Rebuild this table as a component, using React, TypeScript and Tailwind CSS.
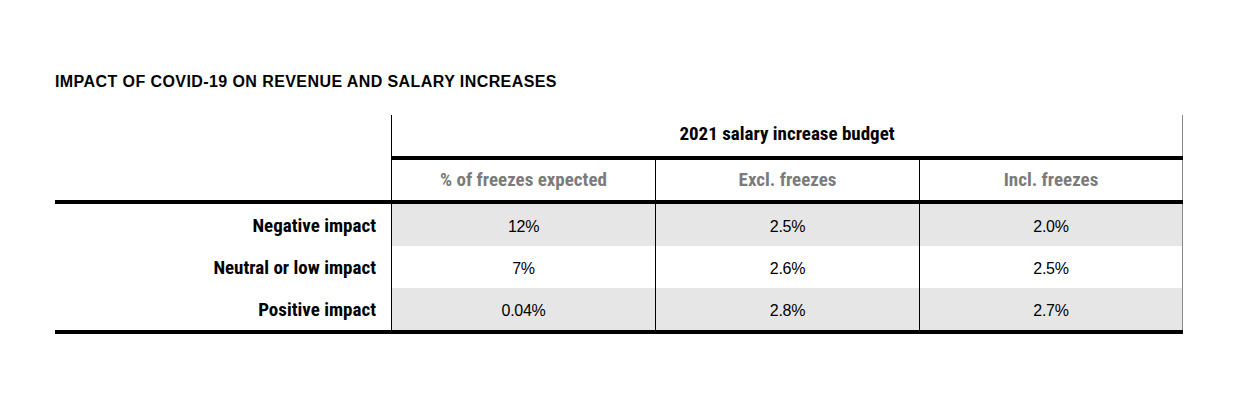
const condensed = { fontFamily: '"Roboto Condensed", "DejaVu Sans Condensed", "Liberation Sans", sans-serif' }

const rows = [
  { label: 'Negative impact', values: ['12%', '2.5%', '2.0%'], shaded: true },
  { label: 'Neutral or low impact', values: ['7%', '2.6%', '2.5%'], shaded: false },
  { label: 'Positive impact', values: ['0.04%', '2.8%', '2.7%'], shaded: true },
]

const subHeads = ['% of freezes expected', 'Excl. freezes', 'Incl. freezes']

export default function App() {
  return (
    <div className="w-[1250px] h-[417px] bg-white text-black" style={{ fontFamily: '"Liberation Sans", Arial, sans-serif' }}>
      <div className="ml-[55px] w-[1128px] pt-[72px]">
        {/* Title */}
        <h2 className="text-[16px] leading-[20px] font-bold tracking-[0.42px]">
          IMPACT OF COVID-19 ON REVENUE AND SALARY INCREASES
        </h2>

        {/* Table */}
        <div className="mt-[23px]">
          {/* group header */}
          <div className="flex h-[41px]">
            <div className="w-[336px]" />
            <div
              className="flex-1 flex items-center justify-center border-l border-black border-r border-r-[#8a8a8a] text-[19px] font-bold pb-[2px]"
              style={condensed}
            >
              2021 salary increase budget
            </div>
          </div>
          <div className="flex h-[4px]">
            <div className="w-[336px]" />
            <div className="flex-1 bg-black" />
          </div>

          {/* column headers */}
          <div className="flex h-[40px]">
            <div className="w-[336px]" />
            {subHeads.map((h, i) => (
              <div
                key={h}
                className={`flex items-center justify-center border-l border-black text-[19px] font-bold text-[#7b7b7b] ${i === 2 ? 'w-[264px] border-r border-r-[#8a8a8a]' : 'w-[264px]'}`}
                style={condensed}
              >
                {h}
              </div>
            ))}
          </div>
          <div className="h-[4px] bg-black" />

          {/* body */}
          {rows.map((r) => (
            <div key={r.label} className="flex h-[42px]">
              <div
                className="w-[336px] flex items-center justify-end pr-[15px] pt-[2px] text-[19px] font-bold"
                style={condensed}
              >
                {r.label}
              </div>
              {r.values.map((v, i) => (
                <div
                  key={i}
                  className={`w-[264px] flex items-center justify-center border-l border-black pt-[3px] text-[16px] tracking-[-0.3px] ${r.shaded ? 'bg-[#e6e6e6]' : 'bg-white'} ${i === 2 ? 'border-r border-r-[#8a8a8a]' : ''}`}
                >
                  {v}
                </div>
              ))}
            </div>
          ))}
          <div className="h-[4px] bg-black" />
        </div>
      </div>
    </div>
  )
}
